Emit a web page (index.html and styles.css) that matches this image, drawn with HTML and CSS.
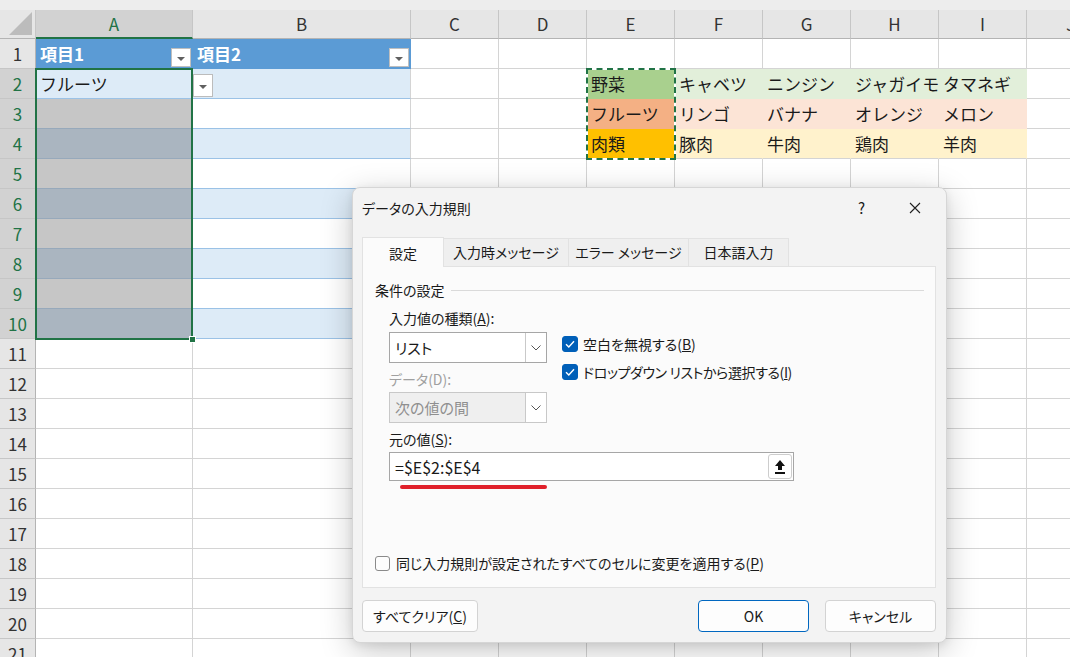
FILE: index.html
```html
<!DOCTYPE html>
<html lang="ja">
<head>
    <meta charset="UTF-8">
    <title>データの入力規則</title>
    <link rel="stylesheet" href="styles.css">
</head>
<body>

<div class="sheet" id="sheet">
    <!-- overlays on top of the grid -->
    <div class="selection"></div>
    <div class="fill-handle"></div>
    <div class="copy-range"></div>
    <div class="list-drop"><i class="tri"></i></div>
</div>

<div class="dialog">
    <div class="title-bar">
        <span class="title">データの入力規則</span>
        <span class="help">?</span>
        <svg class="close" width="12" height="12" viewBox="0 0 12 12">
            <path d="M1 1 L11 11 M11 1 L1 11" stroke="#1f1f1f" stroke-width="1.1" fill="none"/>
        </svg>
    </div>

    <div class="tabs">
        <div class="tab active">設定</div>
        <div class="tab w125">入力時メッセージ</div>
        <div class="tab w120">エラー メッセージ</div>
        <div class="tab w100">日本語入力</div>
    </div>

    <div class="panel">
        <div class="legend"><span>条件の設定</span><i class="rule"></i></div>

        <div class="criteria">
            <div class="left-col">
                <div class="label">入力値の種類(<u>A</u>):</div>
                <div class="combo">
                    <span class="value">リスト</span>
                    <span class="arrow"><svg width="10" height="6" viewBox="0 0 10 6"><path d="M0.5 0.5 L5 5 L9.5 0.5" stroke="#555" fill="none"/></svg></span>
                </div>
                <div class="label disabled">データ(D):</div>
                <div class="combo disabled">
                    <span class="value">次の値の間</span>
                    <span class="arrow"><svg width="10" height="6" viewBox="0 0 10 6"><path d="M0.5 0.5 L5 5 L9.5 0.5" stroke="#555" fill="none"/></svg></span>
                </div>
            </div>
            <div class="right-col">
                <div class="check">
                    <span class="box checked"><svg width="16" height="16" viewBox="0 0 16 16"><path d="M4 8.2 L6.8 11 L12 5.2" stroke="#fff" stroke-width="1.4" fill="none"/></svg></span>
                    <span>空白を無視する(<u>B</u>)</span>
                </div>
                <div class="check">
                    <span class="box checked"><svg width="16" height="16" viewBox="0 0 16 16"><path d="M4 8.2 L6.8 11 L12 5.2" stroke="#fff" stroke-width="1.4" fill="none"/></svg></span>
                    <span class="tight">ドロップダウン リストから選択する(<u>I</u>)</span>
                </div>
            </div>
        </div>

        <div class="label">元の値(<u>S</u>):</div>
        <div class="source">
            <span class="value">=$E$2:$E$4</span>
            <span class="pick">
                <svg width="12" height="16" viewBox="0 0 12 16"><path d="M6 1 L11 7 L8 7 L8 11 L4 11 L4 7 L1 7 Z" fill="#111"/><rect x="1" y="13" width="10" height="2" fill="#111"/></svg>
            </span>
        </div>
        <div class="mark"></div>

        <div class="check apply">
            <span class="box"></span>
            <span>同じ入力規則が設定されたすべてのセルに変更を適用する(<u>P</u>)</span>
        </div>
    </div>

    <div class="buttons">
        <button class="btn clear">すべてクリア(<u>C</u>)</button>
        <button class="btn ok">OK</button>
        <button class="btn cancel">キャンセル</button>
    </div>
</div>

<script>
    const sheet = document.getElementById('sheet');
    const letters = ['A', 'B', 'C', 'D', 'E', 'F', 'G', 'H', 'I', 'J'];

    const values = {
        A1: '項目1', B1: '項目2', A2: 'フルーツ',
        E2: '野菜', F2: 'キャベツ', G2: 'ニンジン', H2: 'ジャガイモ', I2: 'タマネギ',
        E3: 'フルーツ', F3: 'リンゴ', G3: 'バナナ', H3: 'オレンジ', I3: 'メロン',
        E4: '肉類', F4: '豚肉', G4: '牛肉', H4: '鶏肉', I4: '羊肉'
    };

    // fill colour of the lookup rows
    const fills = { 2: 'veg', 3: 'fruit', 4: 'meat' };

    function add(cls, text) {
        const d = document.createElement('div');
        d.className = cls;
        if (text !== undefined) d.textContent = text;
        sheet.appendChild(d);
        return d;
    }

    add('strip');
    add('corner');
    letters.forEach(l => add(l === 'A' ? 'col-head active' : 'col-head', l));

    for (let r = 1; r <= 21; r++) {
        add(r >= 2 && r <= 10 ? 'row-head active' : 'row-head', r);

        letters.forEach(l => {
            const cls = ['cell'];
            const inTable = (l === 'A' || l === 'B') && r <= 10;

            if (inTable) {
                if (r === 1) cls.push('thead');
                else cls.push(r % 2 === 0 ? 'band' : 'plain');
                if (l === 'A') cls.push('col-a');
                if (l === 'A' && r >= 3) cls.push('sel');
            }
            if (fills[r] && 'EFGHI'.includes(l)) {
                cls.push(l === 'E' ? fills[r] + '-key' : fills[r]);
            }

            const cell = add(cls.join(' '), values[l + r]);

            // filter buttons on the table header
            if (r === 1 && inTable) {
                const text = cell.textContent;
                cell.textContent = '';
                const span = document.createElement('span');
                span.textContent = text;
                const btn = document.createElement('span');
                btn.className = 'filter';
                btn.innerHTML = '<i class="tri"></i>';
                cell.append(span, btn);
            }
        });
    }
</script>

</body>
</html>
```

FILE: styles.css
```css
* {
    box-sizing: border-box;
}
body {
    margin: 0;
    width: 1070px;
    height: 657px;
    overflow: hidden;
    position: relative;
    background: #fff;
    color: #1f1f1f;
    font-family: "Noto Sans CJK JP", sans-serif;
}

/* ---------- sheet ---------- */
.sheet {
    position: relative;
    display: grid;
    grid-template-columns: 36px 157px 218px repeat(8, 88px);
    grid-template-rows: 10px 29px repeat(21, 30px);
}
.strip {
    grid-column: 1 / -1;
    background: #ededed;
}
.corner {
    position: relative;
    background: #e6e6e6;
    border-right: 1px solid #c6c6c6;
    border-bottom: 1px solid #b4b4b4;
}
.corner::after {
    content: "";
    position: absolute;
    right: 3px;
    bottom: 3px;
    width: 23px;
    height: 23px;
    background: #bcbcbc;
    clip-path: polygon(100% 0, 100% 100%, 0 100%);
}
.col-head {
    background: #e6e6e6;
    border-right: 1px solid #c6c6c6;
    border-bottom: 1px solid #b4b4b4;
    text-align: center;
    font-size: 17px;
    line-height: 28px;
    color: #333;
}
.col-head.active {
    background: #d2d2d2;
    color: #217346;
    border-bottom: 2px solid #217346;
}
.row-head {
    background: #e6e6e6;
    border-right: 1px solid #b4b4b4;
    border-bottom: 1px solid #c6c6c6;
    text-align: center;
    font-size: 17px;
    line-height: 29px;
    color: #333;
}
.row-head.active {
    background: #d2d2d2;
    color: #217346;
}
.cell {
    background: #fff;
    border-right: 1px solid #d4d4d4;
    border-bottom: 1px solid #d4d4d4;
    padding: 0 4px;
    font-size: 17px;
    line-height: 29px;
    white-space: nowrap;
    color: #1a1a1a;
}

/* table A1:B10 */
.thead {
    display: flex;
    justify-content: space-between;
    background: #5b9bd5;
    border-color: #5b9bd5;
    color: #fff;
    font-weight: bold;
    padding-right: 1px;
}
.band {
    background: #ddebf7;
    border-bottom-color: #9bc2e6;
}
.plain {
    border-bottom-color: #9bc2e6;
}
.col-a {
    border-right-color: transparent;
}
.plain.sel {
    background: #c6c6c6;
    border-bottom-color: #97a9bb;
}
.band.sel {
    background: #aab5c0;
    border-bottom-color: #97a9bb;
}
.filter {
    align-self: flex-end;
    width: 20px;
    height: 19px;
    margin-bottom: 1px;
    background: #fff;
    border: 1px solid #bfbfbf;
    display: flex;
    align-items: center;
    justify-content: center;
}
.tri {
    display: block;
    width: 0;
    height: 0;
    border-left: 4px solid transparent;
    border-right: 4px solid transparent;
    border-top: 4px solid #606060;
    margin-top: 2px;
}

/* lookup rows E2:I4 */
.veg-key { background: #a9d08e; border-color: #a9d08e; }
.veg { background: #e2efda; border-color: #e2efda; }
.fruit-key { background: #f4b084; border-color: #f4b084; }
.fruit { background: #fce4d6; border-color: #fce4d6; }
.meat-key { background: #ffc000; border-color: #ffc000; border-bottom-color: #d4d4d4; }
.meat { background: #fff2cc; border-color: #fff2cc; border-bottom-color: #d4d4d4; }

/* overlays */
.selection {
    position: absolute;
    left: 35px;
    top: 68px;
    width: 158px;
    height: 272px;
    border: 2px solid #217346;
    z-index: 2;
}
.fill-handle {
    position: absolute;
    left: 189px;
    top: 336px;
    width: 7px;
    height: 7px;
    background: #217346;
    border: 1px solid #fff;
    z-index: 3;
}
.copy-range {
    position: absolute;
    left: 586px;
    top: 68px;
    width: 90px;
    height: 92px;
    border: 2px solid #fff;
    z-index: 2;
}
.copy-range::after {
    content: "";
    position: absolute;
    inset: -2px;
    border: 2px dashed #217346;
}
.list-drop {
    position: absolute;
    left: 193px;
    top: 74px;
    width: 20px;
    height: 23px;
    background: #fff;
    border: 1px solid #bcbcbc;
    display: flex;
    align-items: center;
    justify-content: center;
    z-index: 2;
}

/* ---------- dialog ---------- */
.dialog {
    position: absolute;
    left: 352px;
    top: 187px;
    width: 595px;
    height: 456px;
    background: #f3f3f3;
    border: 1px solid #d6d6d6;
    border-radius: 8px;
    box-shadow: 0 8px 32px rgba(0, 0, 0, 0.22), 0 2px 8px rgba(0, 0, 0, 0.08);
    display: flex;
    flex-direction: column;
    font-size: 14px;
    font-feature-settings: "palt";
    color: #1a1a1a;
    z-index: 10;
}
.title-bar {
    height: 39px;
    display: flex;
    align-items: center;
    padding: 0 25px 0 9px;
}
.title {
    font-size: 14px;
    flex: 1;
}
.help {
    font-size: 15px;
    margin-right: 44px;
}
.tabs {
    display: flex;
    align-items: flex-end;
    margin: 10px 0 0 9px;
    height: 29px;
}
.tab {
    width: 82px;
    height: 28px;
    line-height: 27px;
    text-align: center;
    background: #efefef;
    border: 1px solid #e2e2e2;
    border-bottom: none;
    margin-right: -1px;
}
.tab.active {
    height: 30px;
    line-height: 30px;
    background: #fbfbfb;
    margin-bottom: -1px;
    position: relative;
    z-index: 1;
}
.w125 { width: 126px; }
.w120 { width: 121px; }
.w100 { width: 101px; }

.panel {
    height: 322px;
    margin: 0 10px 0 9px;
    background: #fbfbfb;
    border: 1px solid #e2e2e2;
    padding: 13px 11px 14px 12px;
    display: flex;
    flex-direction: column;
}
.legend {
    display: flex;
    align-items: center;
    height: 20px;
}
.rule {
    flex: 1;
    height: 1px;
    background: #dadada;
    margin-left: 6px;
}
.criteria {
    display: flex;
    gap: 15px;
    padding-left: 14px;
    margin-top: 8px;
}
.left-col {
    width: 158px;
}
.label {
    height: 20px;
    line-height: 20px;
}
.label.disabled {
    color: #a0a0a0;
    margin-top: 6px;
}
.criteria .combo {
    margin-top: 4px;
}
.criteria .combo.disabled {
    margin-top: 3px;
}
.combo {
    height: 31px;
    display: flex;
    background: #fff;
    border: 1px solid #a6a6a6;
}
.combo .value {
    flex: 1;
    padding-left: 5px;
    line-height: 29px;
    font-size: 15px;
}
.combo .arrow {
    width: 21px;
    border-left: 1px solid #c9c9c9;
    background: #fff;
    display: flex;
    align-items: center;
    justify-content: center;
}
.combo.disabled {
    background: #efefef;
    border-color: #c8c8c8;
    color: #8f8f8f;
}
.right-col {
    padding-top: 22px;
}
.check {
    display: flex;
    align-items: center;
    height: 28px;
}
.tight {
    letter-spacing: -0.4px;
}
.box {
    width: 16px;
    height: 16px;
    margin-right: 5px;
    border-radius: 3px;
    border: 1px solid #8a8a8a;
    background: #fdfdfd;
}
.box.checked {
    background: #005fb8;
    border-color: #005fb8;
}
.box.checked svg {
    display: block;
    margin: -1px;
}
.criteria + .label {
    margin: 6px 0 0 14px;
}
.source {
    margin: 3px 0 0 14px;
    width: 405px;
    height: 29px;
    display: flex;
    align-items: center;
    background: #fff;
    border: 1px solid #a6a6a6;
    padding: 0 1px 0 5px;
}
.source .value {
    flex: 1;
    font-size: 16px;
    font-feature-settings: normal;
}
.pick {
    width: 24px;
    height: 25px;
    border: 1px solid #cdcdcd;
    border-radius: 3px;
    background: #fff;
    display: flex;
    align-items: center;
    justify-content: center;
}
.mark {
    margin: 4px 0 0 25px;
    width: 147px;
    height: 4px;
    border-radius: 2px;
    background: #e0202a;
}
.check.apply {
    margin-top: auto;
    height: 20px;
}
.check.apply .box {
    width: 15px;
    height: 15px;
    margin-right: 6px;
}

.buttons {
    display: flex;
    padding: 12px 10px 0 9px;
}
.btn {
    height: 32px;
    font-family: inherit;
    font-size: 14px;
    font-feature-settings: "palt";
    color: #1a1a1a;
    background: #fdfdfd;
    border: 1px solid #d3d3d3;
    border-radius: 4px;
}
.clear {
    width: 116px;
}
.ok {
    width: 111px;
    margin-left: auto;
    border-color: #0067c0;
}
.cancel {
    width: 111px;
    margin-left: 16px;
}
```
